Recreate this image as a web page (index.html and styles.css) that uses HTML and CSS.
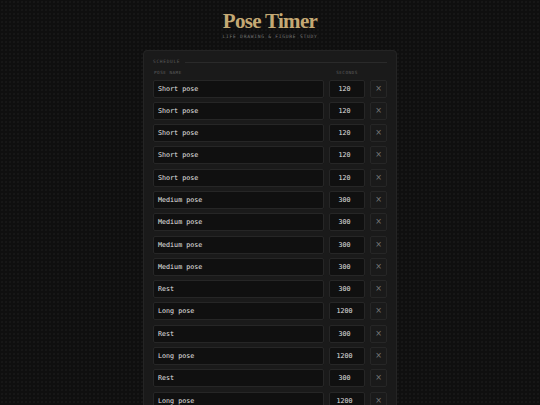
FILE: index.html
```html
<!DOCTYPE html>
<html>
<head>
<meta charset="utf-8">
<link rel="stylesheet" href="styles.css">
</head>
<body>
<header class="header">
  <h1 class="title">Pose Timer</h1>
  <div class="subtitle">LIFE DRAWING &amp; FIGURE STUDY</div>
</header>
<main class="panel">
  <div class="section-label"><span>SCHEDULE</span><span class="rule"></span></div>
  <div class="col-heads"><span class="head-name">POSE NAME</span><span class="head-secs">SECONDS</span><span class="head-x"></span></div>
  <div class="rows">
    <div class="row"><div class="field name">Short pose</div><div class="field secs">120</div><div class="remove">×</div></div>
    <div class="row"><div class="field name">Short pose</div><div class="field secs">120</div><div class="remove">×</div></div>
    <div class="row"><div class="field name">Short pose</div><div class="field secs">120</div><div class="remove">×</div></div>
    <div class="row"><div class="field name">Short pose</div><div class="field secs">120</div><div class="remove">×</div></div>
    <div class="row"><div class="field name">Short pose</div><div class="field secs">120</div><div class="remove">×</div></div>
    <div class="row"><div class="field name">Medium pose</div><div class="field secs">300</div><div class="remove">×</div></div>
    <div class="row"><div class="field name">Medium pose</div><div class="field secs">300</div><div class="remove">×</div></div>
    <div class="row"><div class="field name">Medium pose</div><div class="field secs">300</div><div class="remove">×</div></div>
    <div class="row"><div class="field name">Medium pose</div><div class="field secs">300</div><div class="remove">×</div></div>
    <div class="row"><div class="field name">Rest</div><div class="field secs">300</div><div class="remove">×</div></div>
    <div class="row"><div class="field name">Long pose</div><div class="field secs">1200</div><div class="remove">×</div></div>
    <div class="row"><div class="field name">Rest</div><div class="field secs">300</div><div class="remove">×</div></div>
    <div class="row"><div class="field name">Long pose</div><div class="field secs">1200</div><div class="remove">×</div></div>
    <div class="row"><div class="field name">Rest</div><div class="field secs">300</div><div class="remove">×</div></div>
    <div class="row"><div class="field name">Long pose</div><div class="field secs">1200</div><div class="remove">×</div></div>
  </div>
</main>
</body>
</html>
```
FILE: styles.css
```css
html, body {
  margin: 0;
  padding: 0;
}
body {
  background-color: #0f0f0f;
  background-image: radial-gradient(circle, #171717 0.7px, transparent 0.8px);
  background-size: 4px 4px;
  font-family: "DejaVu Sans Mono", "Liberation Mono", monospace;
  color: #d8d8d8;
  min-height: 405px;
}
.header {
  text-align: center;
  padding-top: 9px;
}
.title {
  margin: 0;
  font-family: "Liberation Serif", "DejaVu Serif", serif;
  font-weight: 700;
  font-size: 21px;
  line-height: 24px;
  letter-spacing: -0.7px;
  color: #c4a974;
}
.subtitle {
  font-size: 4.6px;
  line-height: 8px;
  letter-spacing: 0.75px;
  color: #777777;
}
.panel {
  box-sizing: border-box;
  width: 254px;
  margin: 9px auto 0;
  background: #1a1a1a;
  border: 1px solid #242424;
  border-radius: 4px;
  padding: 7px 9px 20px;
}
.section-label {
  display: flex;
  align-items: center;
  gap: 5px;
  font-size: 4.5px;
  line-height: 8px;
  letter-spacing: 0.7px;
  color: #5a5a5a;
}
.rule {
  flex: 1;
  height: 1px;
  background: #2a2a2a;
}
.col-heads {
  display: flex;
  gap: 5px;
  margin-top: 3px;
  font-size: 4.3px;
  line-height: 8px;
  letter-spacing: 0.5px;
  color: #5e5e5e;
}
.head-name {
  flex: 1;
  padding-left: 1px;
}
.head-secs {
  width: 36px;
  text-align: center;
}
.head-x {
  width: 17px;
}
.rows {
  display: flex;
  flex-direction: column;
  gap: 4.3px;
  margin-top: 2.5px;
}
.row {
  display: flex;
  gap: 5px;
  height: 18px;
}
.field {
  box-sizing: border-box;
  height: 18px;
  background: #101010;
  border: 1px solid #262626;
  border-radius: 2px;
  font-size: 6.7px;
  line-height: 16px;
  color: #e2e2e2;
}
.name {
  flex: 1;
  padding-left: 4px;
}
.secs {
  width: 36px;
  text-align: center;
  padding-right: 5px;
}
.remove {
  box-sizing: border-box;
  width: 17px;
  height: 18px;
  border: 1px solid #262626;
  border-radius: 2px;
  color: #7a7a7a;
  font-family: "DejaVu Sans", sans-serif;
  font-size: 8px;
  line-height: 16px;
  text-align: center;
}
```
